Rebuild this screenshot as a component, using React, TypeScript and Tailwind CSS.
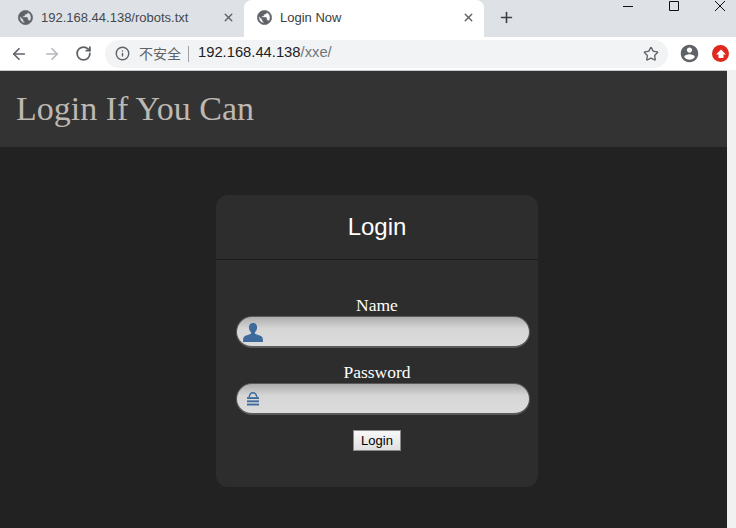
import React from "react"
import { ArrowLeft, ArrowRight, RotateCw, Info, Star, Plus, X } from "lucide-react"

const GlobeIcon = ({ className }: { className?: string }) => (
  <svg viewBox="0 0 24 24" className={className} fill="currentColor" stroke="currentColor" strokeWidth={0.9}>
    <path d="M12 2C6.48 2 2 6.48 2 12s4.48 10 10 10 10-4.48 10-10S17.52 2 12 2zm-1 17.93c-3.95-.49-7-3.85-7-7.93 0-.62.08-1.21.21-1.79L9 15v1c0 1.1.9 2 2 2v1.93zm6.9-2.54c-.26-.81-1-1.39-1.9-1.39h-1v-3c0-.55-.45-1-1-1H8v-2h2c.55 0 1-.45 1-1V7h2c1.1 0 2-.9 2-2v-.41c2.93 1.19 5 4.06 5 7.41 0 2.08-.8 3.97-2.1 5.39z" />
  </svg>
)

const AccountIcon = ({ className }: { className?: string }) => (
  <svg viewBox="0 0 24 24" className={className} fill="currentColor">
    <path d="M12 2C6.48 2 2 6.48 2 12s4.48 10 10 10 10-4.48 10-10S17.52 2 12 2zm0 3c1.66 0 3 1.34 3 3s-1.34 3-3 3-3-1.34-3-3 1.34-3 3-3zm0 14.2c-2.5 0-4.71-1.28-6-3.22.03-1.99 4-3.08 6-3.08s5.97 1.09 6 3.08c-1.29 1.94-3.5 3.22-6 3.22z" />
  </svg>
)

const UserGlyph = () => (
  <svg viewBox="0 0 21 20" className="mt-[1px] h-[19px] w-[20px] text-[#3f6a9c]" fill="currentColor">
    <path d="M10.5 0C13.300 0 14.800 2 14.800 4.600c0 2.200-1 4.200-2.200 5.200v1.500c1.200.8 6 1.600 7.600 3.400.5.600.8 2.600.8 5.300H0c0-2.700.3-4.700.8-5.300 1.600-1.800 6.400-2.600 7.600-3.400V9.800C7.200 8.800 6.200 6.800 6.200 4.600 6.200 2 7.700 0 10.500 0z" />
  </svg>
)

const LockGlyph = () => (
  <svg viewBox="0 0 13 15" className="h-[14px] w-[12px] text-[#3f6a9c]" fill="currentColor">
    <path d="M6.500 0C9 0 11 2 11.500 5.500H10C9.500 3 8.300 1.500 6.500 1.500S3.500 3 3 5.500H1.500C2 2 4 0 6.500 0z" />
    <rect x="0" y="5.500" width="13" height="2" />
    <rect x="0" y="9" width="13" height="2" />
    <rect x="0" y="12.500" width="13" height="2" />
  </svg>
)

const WindowControls = () => (
  <div className="ml-auto flex items-start gap-[34px] pr-[10px] pt-[1px] text-[#111]">
    <svg viewBox="0 0 12 12" className="h-[12px] w-[12px]" fill="none" stroke="currentColor">
      <path d="M1 5.500h10" />
    </svg>
    <svg viewBox="0 0 12 12" className="h-[12px] w-[12px]" fill="none" stroke="currentColor">
      <path d="M1.500 .5h9v9h-9z" />
    </svg>
    <svg viewBox="0 0 12 12" className="h-[12px] w-[12px]" fill="none" stroke="currentColor">
      <path d="M1 0l10 10M11 0 1 10" />
    </svg>
  </div>
)

const Tabs = () => (
  <div className="flex h-[37px] items-stretch bg-[#dee1e6] pl-[8px]">
    <div className="flex w-[236px] items-center pb-[2px] pl-[9px] pr-[9px]">
      <GlobeIcon className="h-[17px] w-[17px] text-[#5f6368]" />
      <span className="ml-[7px] flex-1 text-[13px] text-[#45494e]">192.168.44.138/robots.txt</span>
      <X className="h-[13px] w-[13px] text-[#5f6368]" strokeWidth={2.5} />
    </div>
    <div className="flex w-[240px] items-center rounded-t-[8px] bg-white pb-[2px] pl-[12px] pr-[9px]">
      <GlobeIcon className="h-[17px] w-[17px] text-[#5f6368]" />
      <span className="ml-[7px] flex-1 text-[13px] text-[#3c4043]">Login Now</span>
      <X className="h-[13px] w-[13px] text-[#5f6368]" strokeWidth={2.5} />
    </div>
    <div className="flex w-[44px] items-center justify-center pb-[3px]">
      <Plus className="h-[17px] w-[17px] text-[#3c4043]" strokeWidth={2.25} />
    </div>
    <WindowControls />
  </div>
)

const Toolbar = () => (
  <div className="flex h-[33px] items-center bg-white">
    <div className="flex w-[105px] items-center pl-[10px]">
      <ArrowLeft className="h-[18px] w-[18px] text-[#5f6368]" strokeWidth={2.25} />
      <ArrowRight className="ml-[15px] h-[18px] w-[18px] text-[#b4b7bb]" strokeWidth={2.25} />
      <RotateCw className="ml-[14px] h-[17px] w-[17px] text-[#5f6368]" strokeWidth={2.5} />
    </div>
    <div className="flex h-[28px] w-[563px] items-center rounded-full bg-[#f1f3f4] pl-[10px] pr-[9px]">
      <Info className="h-[15px] w-[15px] text-[#5f6368]" strokeWidth={2.25} />
      <span className="ml-[9px] font-['Noto_Sans_CJK_SC',sans-serif] text-[14px] text-[#5f6368]">不安全</span>
      <span className="ml-[7px] h-[16px] w-px bg-[#9aa0a6]" />
      <span className="mb-[2px] ml-[9px] text-[14.75px] text-[#202124]">192.168.44.138<span className="text-[#70757a]">/xxe/</span></span>
      <Star className="ml-auto h-[16px] w-[16px] text-[#5f6368]" strokeWidth={2} />
    </div>
    <AccountIcon className="ml-[11px] h-[21px] w-[21px] text-[#5f6368]" />
    <div className="ml-[12px] flex h-[17px] w-[17px] items-center justify-center rounded-full bg-[#e0281f]">
      <svg viewBox="0 0 10 10" className="h-[10px] w-[10px] text-white" fill="currentColor">
        <path d="M5 .5 10 5.500H7.500V9h-5V5.500H0z" />
      </svg>
    </div>
  </div>
)

const Field = ({ label, icon }: { label: string; icon: React.ReactNode }) => (
  <div className="flex flex-col items-center">
    <label className="text-[17.5px] leading-[21px] text-white">{label}</label>
    <div className="ml-[12px] flex h-[32px] w-[294px] items-center rounded-[16px] border border-b-2 border-[#5a5a5a] bg-[linear-gradient(#adadad,#d6d6d6_40%,#dcdcdc)] pl-[6px]">
      {icon}
    </div>
  </div>
)

export default function App() {
  return (
    <div className="flex h-[528px] w-[736px] flex-col overflow-hidden font-['Liberation_Sans',Arial,sans-serif]">
      <Tabs />
      <Toolbar />
      <div className="flex min-h-0 flex-1 font-['Liberation_Serif',serif]">
        <main className="flex-1 border-t border-[#c9c9c9] bg-[#222]">
          <header className="flex h-[76px] items-center bg-[#333] pl-[16px]">
            <h1 className="text-[34px] leading-none text-[#bdb8b2]">Login If You Can</h1>
          </header>
          <div className="flex justify-center pl-[27px] pt-[48px]">
            <div className="h-[292px] w-[322px] rounded-[12px] bg-[#2d2d2d]">
              <div className="flex h-[65px] items-center justify-center border-b border-[#1c1c1c] font-['Liberation_Sans',sans-serif] text-[24px] text-white">
                Login
              </div>
              <form className="flex flex-col items-center pt-[35px]">
                <Field label="Name" icon={<UserGlyph />} />
                <div className="h-[14px]" />
                <Field
                  label="Password"
                  icon={<span className="ml-[4px] mt-[1px] flex"><LockGlyph /></span>}
                />
                <button
                  type="button"
                  className="mt-[15px] h-[21px] w-[48px] border border-[#8a8a8a] bg-[linear-gradient(#f8f8f8,#dfdfdf)] font-['Liberation_Sans',sans-serif] text-[13px] leading-none text-black"
                >
                  Login
                </button>
              </form>
            </div>
          </div>
        </main>
        <div className="w-[9px] bg-[#f1f1f1]" />
      </div>
    </div>
  )
}
